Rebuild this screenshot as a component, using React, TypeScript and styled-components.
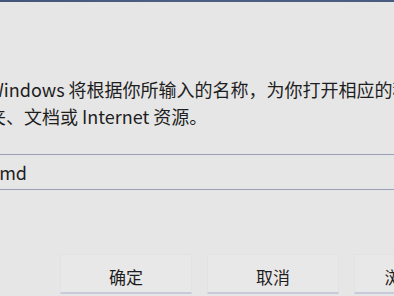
import React from 'react';
import styled, { createGlobalStyle } from 'styled-components';

const GlobalStyle = createGlobalStyle`
	html, body {
		margin: 0;
		padding: 0;
		background: #e6e6e6;
		overflow: hidden;
	}
`;

const Window = styled.div`
	width: 394px;
	height: 296px;
	overflow: hidden;
	background: #e6e6e6;
	display: flex;
	flex-direction: column;
	font-family: 'Noto Sans CJK SC', 'Noto Sans', sans-serif;
	color: #1e1e1e;
`;

const TitleEdge = styled.div`
	height: 2px;
	flex: 0 0 auto;
	background: linear-gradient(90deg, #44557a 0%, #4e5d84 50%, #4a5a80 100%);
`;

const Message = styled.div`
	margin: 74px 0 0 -12px;
	font-size: 18px;
	line-height: 27px;
	white-space: nowrap;
`;

const CommandInput = styled.div`
	margin: 24px -20px 0 -14px;
	height: 34px;
	border-top: 1px solid #9c9eb6;
	border-bottom: 1px solid #9c9eb6;
	display: flex;
	align-items: center;
	padding-left: 4px;
	font-size: 18px;
	white-space: nowrap;
`;

const ButtonRow = styled.div`
	margin-top: 64px;
	padding-left: 60px;
	display: flex;
	gap: 15px;
`;

const DialogButton = styled.div`
	flex: 0 0 132px;
	height: 40px;
	box-sizing: border-box;
	background: #e8e8e8;
	border: 1px solid #e2e2e2;
	border-bottom: 2px solid #c9c9dc;
	display: flex;
	align-items: center;
	justify-content: center;
	font-size: 17px;
	padding-top: 5px;
	white-space: nowrap;
`;

export default function App() {
	return (
		<>
			<GlobalStyle />
			<Window>
				<TitleEdge />
				<Message>
					Windows 将根据你所输入的名称，为你打开相应的程序、文件
					<br />
					夹、文档或 Internet 资源。
				</Message>
				<CommandInput>cmd</CommandInput>
				<ButtonRow>
					<DialogButton>确定</DialogButton>
					<DialogButton>取消</DialogButton>
					<DialogButton>浏览(B)...</DialogButton>
				</ButtonRow>
			</Window>
		</>
	);
}
